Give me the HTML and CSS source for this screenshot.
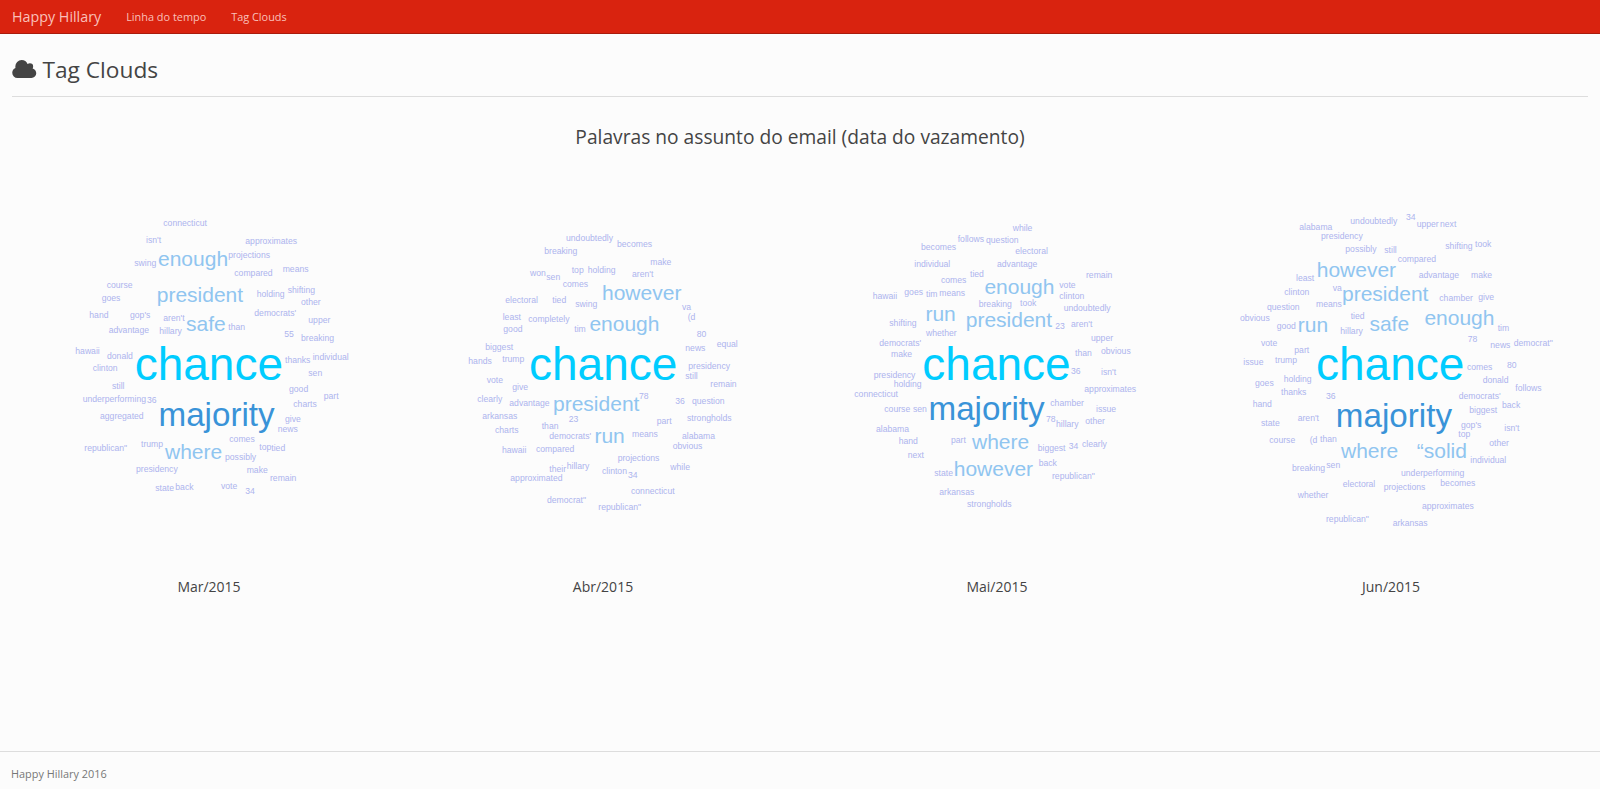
FILE: index.html
```
<!DOCTYPE html>
<html lang="pt-BR">
<head>
<meta charset="utf-8">
<title>Happy Hillary</title>
<link rel="stylesheet" href="styles.css">
</head>
<body>
<nav class="navbar">
  <a class="brand">Happy Hillary</a>
  <a class="nav-link">Linha do tempo</a>
  <a class="nav-link">Tag Clouds</a>
</nav>
<main class="content">
  <h2 class="page-header">
    <svg class="cloud-icon" viewBox="0 0 24 18"><path d="M5.2 18A5.2 5.2 0 0 1 0 12.8C0 10.500 1.300 8.800 3.200 8Q3.100 7.400 3.100 6.400A6.300 6.300 0 0 1 9.400 0C12.200 0 14.300 1.600 15.300 4C16 3.400 16.800 3.200 17.600 3.200A3.300 3.300 0 0 1 20.900 6.500C20.900 7.200 20.700 7.800 20.400 8.400C22.600 9 24 10.900 24 13.200A4.800 4.800 0 0 1 19.200 18Z"/></svg>
    <span>Tag Clouds</span>
  </h2>
  <h3 class="subtitle">Palavras no assunto do email (data do vazamento)</h3>
  <div class="clouds" id="clouds"></div>
</main>
<footer class="footer">Happy Hillary 2016</footer>
<script src="clouds.js"></script>
</body>
</html>
```
FILE: styles.css
```
* { box-sizing: border-box; }
body {
  margin: 0;
  min-height: 789px;
  display: flex;
  flex-direction: column;
  background: #fcfcfc;
  color: #444;
  font-family: "Open Sans", sans-serif;
  font-size: 13px;
}
.navbar {
  height: 34px;
  display: flex;
  align-items: center;
  padding-left: 12px;
  background: #d9230f;
  border-bottom: 1px solid #a91b0c;
  color: #fac0ba;
  font-size: 10.9px;
}
.brand { font-size: 14.3px; margin-right: 25px; }
.nav-link { margin-right: 25px; }
.content { flex: 1; padding: 0 12px; }
.page-header {
  display: flex;
  align-items: center;
  gap: 6px;
  height: 63px;
  margin: 0;
  padding-top: 8px;
  border-bottom: 1px solid #ddd;
  font-size: 22.7px;
  font-weight: 400;
}
.cloud-icon { width: 24.500px; height: 18px; fill: #444; }
.subtitle {
  margin: 26px 0 0;
  line-height: 28px;
  text-align: center;
  font-size: 19.2px;
  font-weight: 400;
}
.clouds { display: grid; grid-template-columns: repeat(4, 1fr); margin-top: 29px; }
.month { text-align: center; }
.cloud { position: relative; height: 394px; font-family: Helvetica, "Liberation Sans", Arial, sans-serif; }
.month-name { line-height: 26px; font-size: 14px; }
.word { position: absolute; line-height: 1; white-space: nowrap; }
.w1 { font-size: 8.65px; color: #adb4ee; margin-top: -7px; }
.w3 { font-size: 21px; color: #90c5f0; margin: -18px 0 0 -0.3px; }
.w7 { font-size: 33.2px; color: #3993d8; margin: -28px 0 0 -1.5px; }
.w10 { font-size: 46px; color: #0cf; margin: -39px 0 0 -2px; }
.footer {
  height: 38px;
  padding: 13px 11px 0;
  border-top: 1px solid #ddd;
  color: #777;
  font-size: 10.9px;
  line-height: 18px;
}
```
FILE: clouds.js
```
// Word coordinates are left edge and baseline, in thirds of a pixel,
// measured from the origin of each cloud. The optional suffix is the weight.
const UNIT = 3;
const months = [
  { name: 'Mar/2015', origin: [48, 20.3], words: `connecticut 310 77
isn't 258 129|approximates 556 131|projections 505 174|enough 295 198 3|swing 223 198|compared 523 226|means 668 216
course 140 264|president 291 305 3|holding 590 290|shifting 683 279|goes 125 303|other 723 314
hand 88 354|gop's 210 353|aren't 310 363|safe 379 392 3|than 505 389|democrats' 583 347|upper 745 368
advantage 146 397|hillary 298 402|55 673 411|breaking 723 421|hawaii 46 461|donald 141 476|chance 230 539 10
thanks 675 488|individual 758 479|clinton 98 511|sen 745 526|still 156 566|good 687 576|part 791 597
underperforming 68 604|36 261 607|charts 700 619|majority 300 677 7|aggregated 120 656|give 675 666|news 653 696
trump 243 739|comes 508 724|republican" 73 751|where 316 777 3|top 598 749|tied 634 751|possibly 495 779
presidency 228 816|make 560 818|remain 630 841|state 286 873|back 346 868|vote 483 866|34 556 882` },
  { name: 'Abr/2015', origin: [49, 40.3], words: `undoubtedly 333 62|becomes 486 79|breaking 268 102|make 586 134
won 225 166|sen 274 179|top 350 157|holding 398 159|aren't 531 169|comes 323 201|however 442 240 3
electoral 151 249|tied 292 249|swing 361 261|va 681 269|least 143 299|completely 220 306|(d 698 299
good 145 336|tim 358 334|enough 404 333 3|80 725 349|biggest 91 389|news 691 391|equal 785 381
hands 40 431|trump 142 426|chance 228 480 10|presidency 700 446|still 691 476|remain 766 499
vote 95 489|give 172 508|clearly 67 544|advantage 163 556|president 295 571 3|78 552 536|36 661 551|question 711 550
arkansas 82 596|23 341 604|than 260 626|part 605 611|strongholds 696 603|charts 120 638
democrats' 283 656|run 419 667 3|means 531 649|alabama 681 656|obvious 653 686|hawaii 141 698|compared 243 696
projections 488 723|hillary 335 746|their 283 756|clinton 441 761|34 519 773|while 646 748|approximated 166 783
connecticut 528 821|democrat" 276 848|republican" 430 868` },
  { name: 'Mai/2015', origin: [40, 30.3], words: `while 518 62|follows 353 94|question 438 98|becomes 243 119|electoral 526 131
individual 223 171|advantage 471 171|tied 390 201|remain 738 203|comes 303 219|enough 434 250 3|vote 658 234
hawaii 98 266|goes 193 254|tim 258 259|means 298 256|clinton 658 266|breaking 416 289|took 540 287|undoubtedly 671 302
run 257 333 3|president 378 351 3|shifting 148 347|23 646 356|aren't 693 351|whether 258 376|upper 753 391
democrats' 118 406|make 153 441|than 705 436|obvious 783 431|chance 253 510 10|36 693 491|isn't 783 494
presidency 101 502|holding 161 529|connecticut 43 559|approximates 733 544|majority 270 630 7|chamber 631 586
course 133 604|sen 219 606|issue 768 604|78 618 636|hillary 648 651|other 736 641|alabama 108 664
hand 176 701|part 333 699|where 397 716 3|biggest 593 721|34 686 716|clearly 726 711|next 203 744
back 596 766|state 283 796|however 342 797 3|republican" 636 806|arkansas 298 854|strongholds 381 891` },
  { name: 'Jun/2015', origin: [36, 25.4], words: `34 528 43|undoubtedly 361 56|upper 560 66|next 630 66|alabama 208 74|presidency 273 101
possibly 346 141|still 463 143|shifting 646 131|took 735 126|compared 503 169|however 261 215 3
least 198 228|advantage 566 219|make 723 219|clinton 163 268|va 308 257|president 337 288 3|chamber 628 286|give 745 284
question 111 314|means 258 306|obvious 30 346|good 140 371|run 204 380 3|tied 362 341|hillary 331 386|safe 419 377 3
enough 584 360 3|tim 803 378|vote 93 421|part 193 443|78 713 411|news 781 428|democrat" 851 421
issue 40 478|trump 135 474|chance 264 525 10|comes 711 493|80 831 488|goes 75 541|holding 161 531
donald 758 533|thanks 153 568|36 288 581|follows 856 556|democrats' 686 581|hand 68 606|majority 322 665 7
biggest 718 623|back 816 608|state 93 663|aren't 203 648|gop's 693 669|isn't 823 676|top 685 696
course 118 714|(d 239 713|than 270 711|where 334 757 3|“solid 561 758 3|other 778 723|individual 721 773
breaking 186 796|sen 289 789|underperforming 513 813|electoral 338 846|projections 461 853|becomes 631 841
whether 203 878|approximates 576 911|republican" 288 951|arkansas 488 963` }
];

const root = document.getElementById('clouds');
for (const month of months) {
  const column = document.createElement('section');
  column.className = 'month';
  const cloud = document.createElement('div');
  cloud.className = 'cloud';
  for (const entry of month.words.split(/[|\n]/)) {
    const [text, x, y, weight = 1] = entry.split(' ');
    const word = document.createElement('span');
    word.className = 'word w' + weight;
    word.textContent = text;
    word.style.left = (month.origin[0] + x / UNIT).toFixed(1) + 'px';
    word.style.top = Math.round(month.origin[1] + y / UNIT) + 'px';
    cloud.append(word);
  }
  const name = document.createElement('div');
  name.className = 'month-name';
  name.textContent = month.name;
  column.append(cloud, name);
  root.append(column);
}
```
